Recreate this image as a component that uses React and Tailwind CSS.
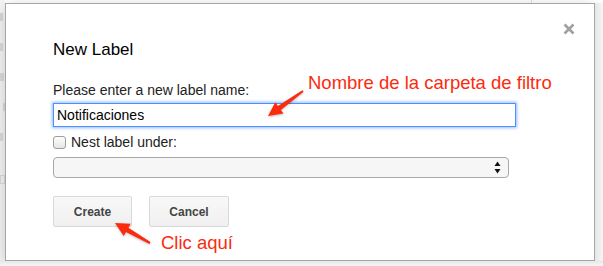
import React from 'react';

const font = { fontFamily: '"Liberation Sans", Arial, Helvetica, sans-serif' };

function CloseIcon() {
  return (
    <svg width="12" height="12" viewBox="0 0 12 12">
      <path d="M1.5 1.5 L10.5 10.5 M10.5 1.5 L1.5 10.5" stroke="#a0a0a0" strokeWidth="2.6" />
    </svg>
  );
}

function SelectArrows() {
  return (
    <svg width="7" height="13" viewBox="0 0 7 13" className="mr-[7px]">
      <path d="M3.5 0.5 L6.5 5 L0.5 5 Z" fill="#111" />
      <path d="M3.5 12.5 L6.5 8 L0.5 8 Z" fill="#111" />
    </svg>
  );
}

function Arrows() {
  return (
    <svg
      width="603"
      height="266"
      viewBox="0 0 603 266"
      className="absolute left-0 top-0 pointer-events-none"
      style={{ filter: 'drop-shadow(0 1px 1px rgba(0,0,0,0.25))' }}
    >
      {/* arrow pointing at the input */}
      <polygon
        points="302.4,90.2 277.9,105.9 275.3,102.2 268,116 283.5,113.6 280.9,109.9 303.6,91.8"
        fill="#fb2b0e"
      />
      {/* arrow pointing at Create */}
      <polygon
        points="150.5,242.1 128.4,227.7 130.7,223.8 115,223 123.7,236 126,232.1 149.5,243.9"
        fill="#fb2b0e"
      />
    </svg>
  );
}

export default function App() {
  return (
    <div className="relative w-[603px] h-[266px] overflow-hidden bg-white flex flex-col" style={font}>
      {/* strip above the dialog */}
      <div className="h-[3px] flex">
        <div className="w-[5px] bg-[#f6f6f6]" />
        <div className="w-[526px]" />
        <div className="w-px bg-[#e2e2e2]" />
      </div>

      <div className="h-[258px] flex">
        {/* faded page behind the dialog */}
        <div className="w-[5px] bg-[#f6f6f6] flex flex-col gap-[22px] pt-[10px]">
          <div className="w-[3px] h-[8px] bg-[#d6d9e4]" />
          <div className="w-[3px] h-[8px] bg-[#dcdcdc]" />
          <div className="w-[4px] h-[8px] bg-[#dcdcdc]" />
          <div className="w-[2px] h-[8px] ml-[3px] bg-[#dcdcdc]" />
          <div className="w-[3px] h-[8px] bg-[#dcdcdc]" />
          <div className="w-[5px] h-[9px] border border-[#dcdcdc] mt-[12px]" />
        </div>

        {/* dialog */}
        <div className="w-[590px] border border-[#a6a6a6] bg-white shadow-[0_4px_16px_rgba(0,0,0,0.2)] flex flex-col">
          <div className="flex justify-end pt-[19px] pr-[19px]">
            <CloseIcon />
          </div>
          <div className="pl-[47px] pt-[5px] flex flex-col items-start">
            <h2 className="text-[17px] leading-[20px] text-black">New Label</h2>
            <label className="mt-[22px] text-[14px] leading-[17px] text-[#222]">
              Please enter a new label name:
            </label>
            <div className="mt-[4px] w-[463px] h-[24px] border border-[#4d90fe] shadow-[0_0_3px_1px_rgba(77,144,254,0.6)] flex items-center pl-[3px] text-[14px] text-black">
              Notificaciones
            </div>
            <div className="mt-[9px] flex items-center h-[13px]">
              <span className="w-[13px] h-[13px] rounded-[3px] border border-[#9e9e9e] bg-gradient-to-b from-[#fdfdfd] to-[#e6e6e6]" />
              <span className="ml-[5px] text-[14px] leading-[17px] text-[#222]">Nest label under:</span>
            </div>
            <div className="mt-[8px] w-[456px] h-[21px] rounded-[4px] border border-[#a9a9a9] bg-[#f6f6f6] flex items-center justify-end">
              <SelectArrows />
            </div>
            <div className="mt-[18px] flex gap-[17px]">
              <button className="w-[79px] h-[31px] rounded-[2px] border border-[#d9d9d9] bg-gradient-to-b from-[#f8f8f8] to-[#f0f0f0] text-[12px] font-bold text-[#444]">
                Create
              </button>
              <button className="w-[80px] h-[31px] rounded-[2px] border border-[#d9d9d9] bg-gradient-to-b from-[#f8f8f8] to-[#f0f0f0] text-[12px] font-bold text-[#444]">
                Cancel
              </button>
            </div>
          </div>
        </div>

        {/* shadow to the right */}
        <div className="flex-1 bg-gradient-to-r from-[#e6e6e6] to-[#f6f6f6]" />
      </div>

      {/* shadow below */}
      <div className="flex-1 bg-gradient-to-b from-[#e8e8e8] to-[#f6f6f6]" />

      {/* annotations */}
      <Arrows />
      <div className="absolute left-[308px] top-[74px] text-[18.5px] leading-[18.5px] text-[#fb2b0e] whitespace-nowrap">
        Nombre de la carpeta de filtro
      </div>
      <div className="absolute left-[161px] top-[234px] text-[18.5px] leading-[18.5px] text-[#fb2b0e] whitespace-nowrap">
        Clic aquí
      </div>
    </div>
  );
}
